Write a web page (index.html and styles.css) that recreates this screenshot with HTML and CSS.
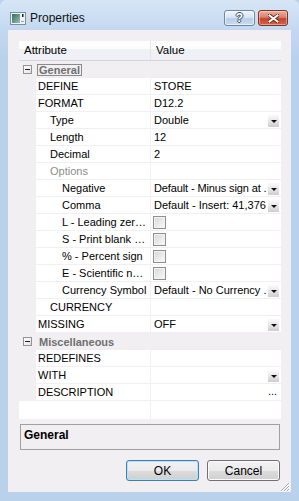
FILE: index.html
```html
<!DOCTYPE html>
<html lang="en">

<head>
    <meta charset="UTF-8">
    <meta name="viewport" content="width=device-width, initial-scale=1.0">
    <title>Properties</title>
    <link rel="stylesheet" href="styles.css">
</head>

<body>
    <div class="window">
        <div class="titlebar">
            <svg class="app-icon" width="16" height="13" viewBox="0 0 16 13">
                <defs>
                    <linearGradient id="ico" x1="0" y1="0" x2="1" y2="1">
                        <stop offset="0" stop-color="#2f6f61" />
                        <stop offset="1" stop-color="#9cc0b4" />
                    </linearGradient>
                </defs>
                <rect x="0.5" y="0.5" width="15" height="12" fill="#eef2f6" stroke="#7f8d9c" />
                <rect x="2" y="2" width="8" height="9" fill="url(#ico)" />
                <rect x="12" y="2" width="1.5" height="3" fill="#1d1d1d" />
                <rect x="11" y="9" width="3" height="1" fill="#9aa6b2" />
            </svg>
            <span class="title">Properties</span>
            <div class="caption-buttons">
                <div class="cap-btn help">?</div>
                <div class="cap-btn close">
                    <svg width="11" height="9" viewBox="0 0 11 9">
                        <path d="M1.5 1.5 L9.5 7.5 M9.5 1.5 L1.5 7.5" stroke="#5e1d12" stroke-width="3.6" stroke-linecap="square" />
                        <path d="M1.5 1.5 L9.5 7.5 M9.5 1.5 L1.5 7.5" stroke="#fff" stroke-width="2" stroke-linecap="square" />
                    </svg>
                </div>
            </div>
        </div>

        <div class="client">
            <div class="grid">
                <div class="grid-head">
                    <div class="head-cell">Attribute</div>
                    <div class="head-cell">Value</div>
                </div>

                <div class="category">
                    <span class="expander"></span>
                    <span class="cat-label focused">General</span>
                </div>
                <div class="row">
                    <div></div>
                    <div class="name l1">DEFINE</div>
                    <div class="value"><span class="text">STORE</span></div>
                </div>
                <div class="row">
                    <div></div>
                    <div class="name l1">FORMAT</div>
                    <div class="value"><span class="text">D12.2</span></div>
                </div>
                <div class="row">
                    <div></div>
                    <div class="name l2">Type</div>
                    <div class="value"><span class="text">Double</span><span class="dd"></span></div>
                </div>
                <div class="row">
                    <div></div>
                    <div class="name l2">Length</div>
                    <div class="value"><span class="text">12</span></div>
                </div>
                <div class="row">
                    <div></div>
                    <div class="name l2">Decimal</div>
                    <div class="value"><span class="text">2</span></div>
                </div>
                <div class="row">
                    <div></div>
                    <div class="name l2 disabled">Options</div>
                    <div class="value"></div>
                </div>
                <div class="row">
                    <div></div>
                    <div class="name l3">Negative</div>
                    <div class="value"><span class="text tight">Default - Minus sign at .</span><span class="dd"></span></div>
                </div>
                <div class="row">
                    <div></div>
                    <div class="name l3">Comma</div>
                    <div class="value"><span class="text">Default - Insert: 41,376</span><span class="dd"></span></div>
                </div>
                <div class="row">
                    <div></div>
                    <div class="name l3">L - Leading zer…</div>
                    <div class="value"><span class="check"></span></div>
                </div>
                <div class="row">
                    <div></div>
                    <div class="name l3">S - Print blank …</div>
                    <div class="value"><span class="check"></span></div>
                </div>
                <div class="row">
                    <div></div>
                    <div class="name l3">% - Percent sign</div>
                    <div class="value"><span class="check"></span></div>
                </div>
                <div class="row">
                    <div></div>
                    <div class="name l3">E - Scientific n…</div>
                    <div class="value"><span class="check"></span></div>
                </div>
                <div class="row">
                    <div></div>
                    <div class="name l3">Currency Symbol</div>
                    <div class="value"><span class="text">Default - No Currency .</span><span class="dd"></span></div>
                </div>
                <div class="row">
                    <div></div>
                    <div class="name l2">CURRENCY</div>
                    <div class="value"></div>
                </div>
                <div class="row">
                    <div></div>
                    <div class="name l1">MISSING</div>
                    <div class="value"><span class="text">OFF</span><span class="dd"></span></div>
                </div>

                <div class="category">
                    <span class="expander"></span>
                    <span class="cat-label">Miscellaneous</span>
                </div>
                <div class="row">
                    <div></div>
                    <div class="name l1">REDEFINES</div>
                    <div class="value"></div>
                </div>
                <div class="row">
                    <div></div>
                    <div class="name l1">WITH</div>
                    <div class="value"><span class="text"></span><span class="dd"></span></div>
                </div>
                <div class="row">
                    <div></div>
                    <div class="name l1">DESCRIPTION</div>
                    <div class="value"><span class="text"></span><span class="dots">...</span></div>
                </div>

                <div class="filler">
                    <div></div>
                    <div></div>
                </div>
            </div>

            <div class="desc"><b>General</b></div>

            <div class="buttons">
                <button class="btn default">OK</button>
                <button class="btn">Cancel</button>
            </div>

            <svg class="grip" width="10" height="10" viewBox="0 0 10 10">
                <path d="M10 1 L1 10 M10 4 L4 10 M10 7 L7 10" stroke="#fff" stroke-width="1" />
                <path d="M9 1 L1 9 M9 4 L4 9 M9 7 L7 9" stroke="#a7a7a7" stroke-width="1" />
            </svg>
        </div>
    </div>
</body>

</html>
```

FILE: styles.css
```css
* {
    padding: 0;
    margin: 0;
    box-sizing: border-box;
}

body {
    width: 299px;
    height: 501px;
    background-color: #b9d1ea;
    font-family: "Liberation Sans", Arial, sans-serif;
    font-size: 11px;
    color: #000;
}

.window {
    width: 299px;
    height: 501px;
    display: flex;
    flex-direction: column;
    border-radius: 6px 6px 0 0;
    background: linear-gradient(#d7e6f6 0, #c3d8f0 30px, #b9d1ea 60px, #b9d1ea 100%);
}

/* title bar */
.titlebar {
    height: 30px;
    display: flex;
    align-items: flex-start;
    padding: 12px 11px 0 10px;
}

.app-icon {
    flex: none;
}

.title {
    margin-left: 4px;
    margin-top: -2px;
    font-size: 12px;
    line-height: 16px;
    color: #111;
}

.caption-buttons {
    margin-left: auto;
    margin-top: -2px;
    display: flex;
    gap: 3px;
}

.cap-btn {
    height: 16px;
    border-radius: 3px;
    display: flex;
    align-items: center;
    justify-content: center;
}

.cap-btn.help {
    width: 31px;
    border: 1px solid #6f86a3;
    background: linear-gradient(#eef4fb 0, #d9e5f3 45%, #b9cde4 55%, #c9dbef 100%);
    box-shadow: inset 0 0 0 1px rgba(255, 255, 255, 0.6);
    color: #fff;
    font-weight: bold;
    font-size: 12px;
    text-shadow: 1px 0 0 #37506f, -1px 0 0 #37506f, 0 1px 0 #37506f, 0 -1px 0 #37506f;
}

.cap-btn.close {
    width: 30px;
    border: 1px solid #7d3224;
    background: linear-gradient(#eab0a1 0, #d9806c 45%, #c4442c 55%, #d2644a 100%);
    box-shadow: inset 0 0 0 1px rgba(255, 230, 220, 0.45);
}

/* client area */
.client {
    flex: 1;
    margin: 0 8px 9px 8px;
    padding: 11px 10px 0 11px;
    background-color: #f1eff1;
    position: relative;
}

.grid {
    width: 262px;
}

.grid-head {
    height: 20px;
    display: grid;
    grid-template-columns: 132px 130px;
    background: linear-gradient(#fdfefd 0, #fbfcfc 40%, #eff1f6 45%, #eef0f5 100%);
    border-bottom: 1px solid #d3d5d8;
}

.head-cell {
    font-size: 11.5px;
    line-height: 19px;
    padding-left: 5px;
}

.head-cell:first-child {
    border-right: 1px solid #e4e5e8;
}

.category {
    height: 17px;
    display: flex;
    align-items: center;
}

.expander {
    width: 9px;
    height: 9px;
    margin-left: 4px;
    border: 1px solid #939393;
    background: linear-gradient(135deg, #ffffff, #e2e2e2);
    position: relative;
}

.expander::after {
    content: "";
    position: absolute;
    left: 1px;
    top: 3px;
    width: 5px;
    height: 1px;
    background-color: #222;
}

.cat-label {
    margin-left: 5px;
    padding: 0 1px;
    height: 12px;
    line-height: 10px;
    font-weight: bold;
    color: #6f6f6f;
    border: 1px solid transparent;
}

.cat-label.focused {
    border-color: #8a8a8a;
}

.row {
    display: grid;
    grid-template-columns: 16px 114px 130px;
    column-gap: 1px;
    padding-bottom: 1px;
    height: 17px;
}

.name,
.value {
    background-color: #fff;
    height: 16px;
    line-height: 16px;
    white-space: nowrap;
    overflow: hidden;
}

.name.l1 {
    padding-left: 2px;
}

.name.l2 {
    padding-left: 14px;
}

.name.l3 {
    padding-left: 26px;
}

.name.disabled {
    color: #8d8d8d;
}

.value {
    display: flex;
    align-items: center;
    padding-left: 3px;
}

.value .text {
    flex: 1;
    overflow: hidden;
    white-space: nowrap;
}

.value .text.tight {
    letter-spacing: -0.12px;
}

.dd {
    flex: none;
    width: 11px;
    height: 12px;
    margin-right: 2px;
    align-self: flex-end;
    margin-bottom: 1px;
    background: linear-gradient(#fbfbfb, #e6e6e6 50%, #cdcdcd);
    position: relative;
}

.dd::after {
    content: "";
    position: absolute;
    left: 3px;
    top: 5px;
    border-left: 3px solid transparent;
    border-right: 3px solid transparent;
    border-top: 3px solid #111;
}

.dots {
    flex: none;
    width: 13px;
    line-height: 18px;
    align-self: flex-end;
}

.check {
    width: 13px;
    height: 13px;
    margin-left: -1px;
    border: 1px solid #8f8f8f;
    background: linear-gradient(135deg, #d6d6d6, #fbfbfb);
    box-shadow: inset 0 0 0 1px #f3f3f3;
}

.filler {
    height: 18px;
    display: grid;
    grid-template-columns: 131px 130px;
    column-gap: 1px;
}

.filler div {
    background-color: #fff;
}

/* description pane */
.desc {
    width: 260px;
    height: 26px;
    margin: 5px 0 0 1px;
    padding: 3px 0 0 3px;
    border: 1px solid #a0a0a0;
    font-size: 12px;
    line-height: 15px;
}

.buttons {
    display: flex;
    justify-content: flex-end;
    gap: 8px;
    margin: 10px 1px 0 0;
}

.btn {
    width: 73px;
    height: 21px;
    border: 1px solid #707070;
    border-radius: 3px;
    background: linear-gradient(#f2f2f2 0, #ebebeb 50%, #dddddd 50%, #cfcfcf 100%);
    box-shadow: inset 0 0 0 1px #fbfbfb;
    font-family: "Liberation Sans", Arial, sans-serif;
    font-size: 12px;
    color: #000;
}

.btn.default {
    border-color: #3c7fb1;
    box-shadow: inset 0 0 0 1px #b9e2f8;
}

.grip {
    position: absolute;
    right: 1px;
    bottom: 0;
}
```
